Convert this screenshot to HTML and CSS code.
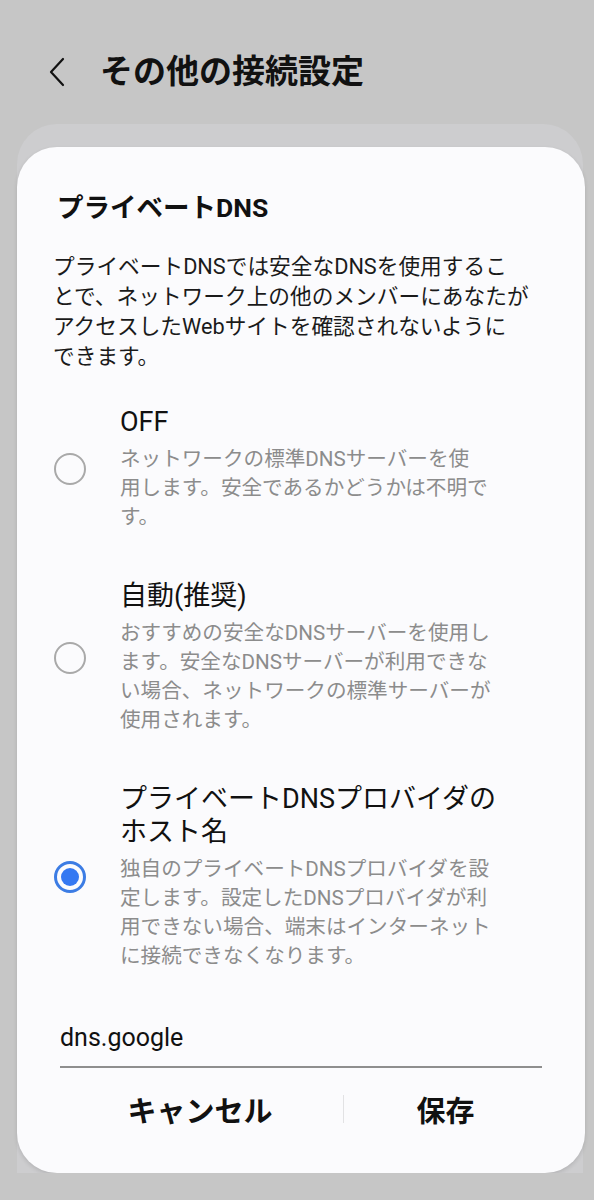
FILE: index.html
```html
<!DOCTYPE html>
<html lang="ja">
<head>
  <meta charset="UTF-8">
  <title>その他の接続設定</title>
  <link rel="stylesheet" href="styles.css">
</head>
<body>
  <!-- ヘッダー -->
  <div class="header">
    <svg class="back" width="20" height="32" viewBox="0 0 20 32">
      <path d="M15 3 L3 16 L15 29" fill="none" stroke="#111" stroke-width="2.2" stroke-linecap="round" stroke-linejoin="round"/>
    </svg>
    <h1 class="title">その他の接続設定</h1>
  </div>

  <!-- 背面のカード -->
  <div class="sheet">
    <!-- ダイアログ -->
    <div class="dialog">
      <h2 class="dialog-title">プライベートDNS</h2>
      <p class="desc">プライベートDNSでは安全なDNSを使用するこ<br>とで、ネットワーク上の他のメンバーにあなたが<br>アクセスしたWebサイトを確認されないように<br>できます。</p>

      <div class="options">
        <div class="option">
          <span class="radio"></span>
          <div class="option-text">
            <div class="label">OFF</div>
            <div class="sub">ネットワークの標準DNSサーバーを使<br>用します。安全であるかどうかは不明で<br>す。</div>
          </div>
        </div>
        <div class="option">
          <span class="radio"></span>
          <div class="option-text">
            <div class="label">自動(推奨)</div>
            <div class="sub">おすすめの安全なDNSサーバーを使用し<br>ます。安全なDNSサーバーが利用できな<br>い場合、ネットワークの標準サーバーが<br>使用されます。</div>
          </div>
        </div>
        <div class="option">
          <span class="radio checked"></span>
          <div class="option-text">
            <div class="label">プライベートDNSプロバイダの<br>ホスト名</div>
            <div class="sub">独自のプライベートDNSプロバイダを設<br>定します。設定したDNSプロバイダが利<br>用できない場合、端末はインターネット<br>に接続できなくなります。</div>
          </div>
        </div>
      </div>

      <div class="host">dns.google</div>

      <div class="buttons">
        <button class="btn cancel">キャンセル</button>
        <span class="divider"></span>
        <button class="btn">保存</button>
      </div>
    </div>
  </div>
</body>
</html>
```

FILE: styles.css
```css
/* 全体 */
body {
  margin: 0;
  background: #c6c6c6;
  font-family: Roboto, "Noto Sans CJK JP", sans-serif;
  color: #111;
}
.header {
  display: flex;
  align-items: center;
  height: 40px;
  padding: 52px 0 0 48px;
  margin-bottom: 32px;
}
.back {
  display: block;
  margin-right: 32px;
}
.title {
  margin: 0;
  font-size: 33px;
  font-weight: 700;
  line-height: 40px;
}
/* 背面カードとダイアログ */
.sheet {
  margin: 0 11px 0 17px;
  padding-top: 23px;
  background: #cdcdcf;
  border-radius: 40px 40px 0 0;
}
.dialog {
  margin-right: -2px;
  background: #fbfbfd;
  border-radius: 40px;
  padding: 44px 0 0 0;
  box-shadow: 0 2px 4px rgba(0, 0, 0, 0.12);
}
.dialog-title {
  margin: 0 0 27px 40px;
  font-size: 26.5px;
  font-weight: 700;
  line-height: 34px;
}
.desc {
  margin: 0 0 0 36px;
  font-size: 21.7px;
  line-height: 30px;
  color: #1a1a1a;
}
/* 選択肢 */
.options {
  display: flex;
  flex-direction: column;
  gap: 48px;
  margin-top: 34px;
  padding-left: 37px;
}
.option {
  display: flex;
  align-items: center;
}
.radio {
  flex: none;
  display: flex;
  align-items: center;
  justify-content: center;
  width: 32px;
  height: 32px;
  border: 2.5px solid #a9a9a9;
  border-radius: 50%;
  box-sizing: border-box;
  margin-right: 34px;
}
.radio.checked {
  border: 3px solid #3c7ce4;
}
.radio.checked::after {
  content: "";
  width: 18px;
  height: 18px;
  border-radius: 50%;
  background: #3478f2;
}
.label {
  font-size: 27px;
  line-height: 33px;
  color: #111;
}
.sub {
  margin-top: 6px;
  font-size: 20.6px;
  line-height: 29px;
  color: #8c8c8c;
}
/* ホスト名入力 */
.host {
  margin: 51px 43px 0 43px;
  padding-bottom: 12px;
  border-bottom: 2px solid #8e8e8e;
  font-size: 25px;
  line-height: 32px;
}
/* ボタン */
.buttons {
  display: flex;
  align-items: center;
  padding: 16px 38px 39px 40px;
}
.btn {
  flex: 1;
  border: none;
  background: none;
  font-family: inherit;
  font-size: 29px;
  font-weight: 700;
  color: #111;
  padding: 4px 0;
}
.btn.cancel {
  flex: 0 0 286px;
}
.divider {
  width: 1px;
  height: 28px;
  background: #e2e2e4;
}
```
